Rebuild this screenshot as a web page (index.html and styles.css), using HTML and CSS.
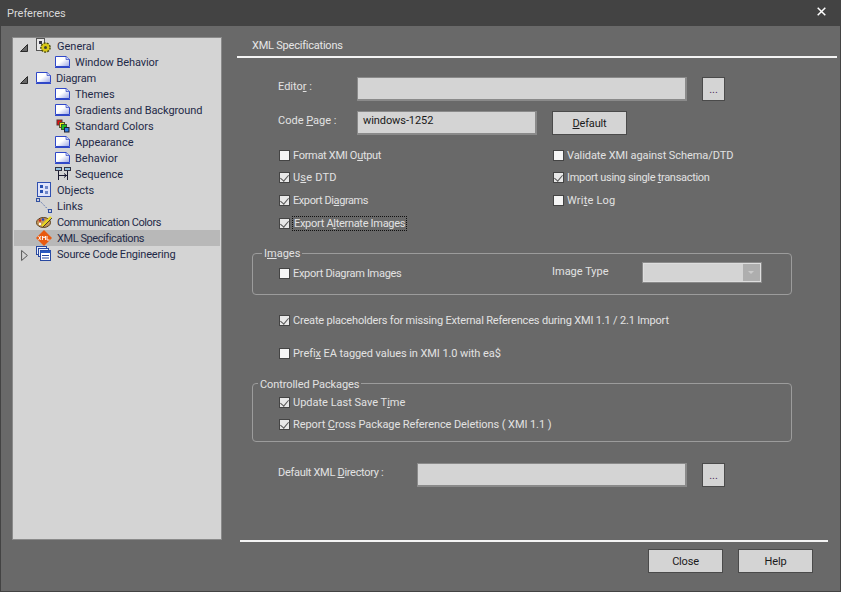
FILE: index.html
```html
<!DOCTYPE html>
<html>
<head>
<meta charset="utf-8">
<title>Preferences</title>
<link rel="stylesheet" href="styles.css">
</head>
<body>
<div class="window">
  <div class="titlebar">
    <span class="title">Preferences</span>
    <svg class="close" width="9" height="9" viewBox="0 0 9 9"><path d="M0.7 0.7L8.3 8.3M8.3 0.7L0.7 8.3" stroke="#fff" stroke-width="1.5" fill="none"/></svg>
  </div>
  <div class="body">
    <aside class="tree">
      <div class="node"><svg class="tw" width="12" height="16" viewBox="0 0 12 16"><use href="#open"/></svg><svg class="ic" width="18" height="16" viewBox="0 0 18 16"><rect x="0.5" y="0.5" width="8" height="12" fill="#e8e8e8" stroke="#555"/><rect x="3" y="3" width="3" height="3" fill="#334"/><circle cx="9.5" cy="9.5" r="4.6" fill="#d8c818" stroke="#4a4a10" stroke-width="1.4" stroke-dasharray="2 1.2"/><circle cx="9.5" cy="9.5" r="1.5" fill="#443"/></svg><span>General</span></div>
      <div class="node sub"><svg class="ic" width="16" height="16" viewBox="0 0 16 16"><use href="#doc"/></svg><span class="s1">Window Behavior</span></div>
      <div class="node"><svg class="tw" width="12" height="16" viewBox="0 0 12 16"><use href="#open"/></svg><svg class="ic ic-diagram" width="18" height="16" viewBox="0 0 18 16"><use href="#doc"/></svg><span class="s2">Diagram</span></div>
      <div class="node sub"><svg class="ic" width="16" height="16" viewBox="0 0 16 16"><use href="#doc"/></svg><span>Themes</span></div>
      <div class="node sub"><svg class="ic" width="16" height="16" viewBox="0 0 16 16"><use href="#doc"/></svg><span class="s1">Gradients and Background</span></div>
      <div class="node sub"><svg class="ic" width="16" height="16" viewBox="0 0 16 16"><rect x="2" y="2" width="5" height="5" fill="#e01010" stroke="#533"/><rect x="4.5" y="4.5" width="5" height="5" fill="#f0e820" stroke="#553"/><rect x="6.5" y="6.5" width="5" height="5" fill="#20c020" stroke="#353"/><rect x="9.5" y="9.5" width="4.5" height="4.5" fill="#3080e0" stroke="#223"/></svg><span>Standard Colors</span></div>
      <div class="node sub"><svg class="ic" width="16" height="16" viewBox="0 0 16 16"><use href="#doc"/></svg><span>Appearance</span></div>
      <div class="node sub"><svg class="ic" width="16" height="16" viewBox="0 0 16 16"><use href="#doc"/></svg><span>Behavior</span></div>
      <div class="node sub"><svg class="ic" width="16" height="16" viewBox="0 0 16 16"><rect x="0.5" y="1.5" width="6" height="3" fill="#8fc0e0" stroke="#334"/><rect x="9.5" y="1.5" width="6" height="3" fill="#8fc0e0" stroke="#334"/><path d="M3.5 5V14M12.5 5V14M4 9.5H12M9 7.5L11.5 9.5L9 11.5" stroke="#1a1a30" fill="none"/></svg><span>Sequence</span></div>
      <div class="node top"><svg class="ic" width="18" height="16" viewBox="0 0 18 16"><rect x="1.5" y="0.5" width="13" height="14" fill="#dfe4fa" stroke="#3050b0"/><rect x="4" y="3" width="3" height="3" fill="#2850b0"/><rect x="9" y="4" width="3" height="3" fill="#7088c8"/><rect x="4" y="8" width="3" height="3" fill="#2850b0"/><rect x="9" y="9" width="3" height="3" fill="#7088c8"/></svg><span>Objects</span></div>
      <div class="node top"><svg class="ic" width="18" height="16" viewBox="0 0 18 16"><path d="M3 2L13.5 13" stroke="#3050a0" stroke-dasharray="1 1.5" fill="none"/><rect x="0.5" y="0.5" width="3" height="3" fill="#ccd" stroke="#3050a0"/><rect x="12.5" y="11.5" width="3" height="3" fill="#ccd" stroke="#3050a0"/></svg><span>Links</span></div>
      <div class="node top"><svg class="ic" width="18" height="16" viewBox="0 0 18 16"><ellipse cx="7.5" cy="8.5" rx="7" ry="5" fill="#c89858" stroke="#5a4020"/><circle cx="4" cy="6.5" r="1.2" fill="#d02020"/><circle cx="7" cy="5.5" r="1.2" fill="#2040c0"/><circle cx="4" cy="10" r="1.2" fill="#fff"/><path d="M6 12L15 3" stroke="#e8d820" stroke-width="2.4"/><path d="M7 13L16 4" stroke="#222" stroke-width="0.8"/></svg><span class="s4">Communication Colors</span></div>
      <div class="node top selected"><svg class="ic" width="18" height="16" viewBox="0 0 18 16"><path d="M8 0L16 8L8 16L0 8Z" fill="#e85a10"/><path d="M2.5 6L5 10M5 6L2.5 10M6.5 10V6L8 8L9.5 6V10M11 6V10H13.5" stroke="#fff" stroke-width="0.9" fill="none"/></svg><span class="s4">XML Specifications</span></div>
      <div class="node"><svg class="tw" width="12" height="16" viewBox="0 0 12 16"><path d="M2.6 4.5L8.4 9.5L2.6 14.5Z" fill="#d4d4d4" stroke="#555"/></svg><svg class="ic" width="18" height="16" viewBox="0 0 18 16"><rect x="0.5" y="0.5" width="10" height="8" fill="#e8ecf8" stroke="#2848a0"/><rect x="2.5" y="2.5" width="10" height="8" fill="#e8ecf8" stroke="#2848a0"/><rect x="4.5" y="4.5" width="10" height="10" fill="#fff" stroke="#2848a0"/><rect x="4.5" y="4.5" width="10" height="2.5" fill="#2858c0"/><path d="M6 9.5H13M6 12H13" stroke="#2848a0"/></svg><span class="s2">Source Code Engineering</span></div>
    </aside>
    <main class="main">
      <h1 class="heading">XML Specifications</h1>
      <div class="form">
        <div class="row row-editor">
          <label class="lbl">Edito<u>r</u> :</label>
          <div class="input w-330"></div>
          <button class="btn btn-dots">...</button>
        </div>
        <div class="row row-code">
          <label class="lbl">Code <u>P</u>age :</label>
          <div class="input w-180 s1">windows-1252</div>
          <button class="btn btn-default s2"><u>D</u>efault</button>
        </div>
        <div class="checks">
          <div class="col">
            <div class="chk r1"><i class="box"></i><span class="s3">Format XMI O<u>u</u>tput</span></div>
            <div class="chk r2"><i class="box on"></i><span class="w2">U<u>s</u>e DTD</span></div>
            <div class="chk r3"><i class="box on"></i><span class="s4">Export Di<u>a</u>grams</span></div>
            <div class="chk r4"><i class="box on"></i><span class="focus s3">Export A<u>l</u>ternate Images</span></div>
          </div>
          <div class="col">
            <div class="chk r1"><i class="box"></i><span class="s1">Validate XMI against Schema/DTD</span></div>
            <div class="chk r2"><i class="box on"></i><span class="s3">Import using single <u>t</u>ransaction</span></div>
            <div class="chk r3"><i class="box"></i><span class="w2">Wri<u>t</u>e Log</span></div>
          </div>
        </div>
        <fieldset class="group group-images">
          <legend class="legend-images">I<u>m</u>ages</legend>
          <div class="chk group-chk"><i class="box"></i><span class="s3">Export Diagram Images</span></div>
          <span class="image-type">Image Type</span>
          <div class="select"><i class="arrow"></i></div>
        </fieldset>
        <div class="chk solo-a"><i class="box on"></i><span class="s2">Create placeholders for missing External References during XMI 1.1 / 2.1 Import</span></div>
        <div class="chk solo-b"><i class="box"></i><span class="s1">Prefi<u>x</u> EA tagged values in XMI 1.0 with ea$</span></div>
        <fieldset class="group group-packages">
          <legend class="legend-packages s1">Controlled Packages</legend>
          <div class="chk group-chk pk1"><i class="box on"></i><span>Update Last Save T<u>i</u>me</span></div>
          <div class="chk group-chk pk2"><i class="box on"></i><span class="s1">Report <u>C</u>ross Package Reference Deletions ( XMI 1.1 )</span></div>
        </fieldset>
        <div class="row row-dir">
          <label class="lbl lbl-dir s3">Default XML <u>D</u>irectory :</label>
          <div class="input w-270"></div>
          <button class="btn btn-dots">...</button>
        </div>
      </div>
      <div class="footer">
        <button class="btn btn-foot s2">Close</button>
        <button class="btn btn-foot s2">Help</button>
      </div>
    </main>
  </div>
</div>
<svg class="defs" width="0" height="0"><defs><linearGradient id="docg" x1="0" y1="0" x2="1" y2="1"><stop offset="0.45" stop-color="#fff"/><stop offset="1" stop-color="#98a4e4"/></linearGradient><g id="open"><path d="M1.5 13.5H8.5V6.5Z" fill="#666" stroke="#2a2a2a"/></g><g id="doc"><path d="M0.5 2.5H11L14.5 5.5V12.5H0.5Z" fill="url(#docg)" stroke="#3048c8"/><path d="M0 13.5H15" stroke="#3048c8" stroke-width="1"/><path d="M11 2.5V5.5H14.5" fill="#c8d0f4" stroke="#3048c8" stroke-width="0.7"/></g></defs></svg>
</body>
</html>
```
FILE: styles.css
```css
* { box-sizing: border-box; }
html, body { margin: 0; padding: 0; }
body { width: 841px; height: 592px; overflow: hidden; background: #696969; font-family: Roboto, "Liberation Sans", Arial, sans-serif; font-size: 11px; color: #e2e2e2; }
.defs { position: absolute; }
.s1 { letter-spacing: -0.08px; }
.s2 { letter-spacing: -0.18px; }
.s3 { letter-spacing: -0.3px; }
.s4 { letter-spacing: -0.42px; }
.w2 { letter-spacing: 0.2px; }
.window { width: 841px; height: 592px; display: flex; flex-direction: column; border: 1px solid #434343; border-top: 0; }
.titlebar { height: 26px; background: #434343; display: flex; align-items: center; justify-content: space-between; padding: 0 14px 0 6px; flex: none; }
.title { color: #d8d8d8; margin-top: 1px; }
.close { display: block; margin-bottom: 3px; }
.body { flex: 1; display: flex; padding: 11px 3px 0 11px; }
.tree { width: 210px; height: 503px; background: #d4d4d4; border: 1px solid #8a8a8a; padding: 0 1px; color: #1f2a48; flex: none; }
.node { height: 16px; display: flex; align-items: center; padding-left: 5px; white-space: nowrap; }
.node .tw { margin-right: 5px; flex: none; }
.node .ic { margin-right: 3px; flex: none; }
.node .ic-diagram { margin-right: 2px; }
.node.sub { padding-left: 41px; }
.node.sub .ic { margin-right: 4px; }
.node.top { padding-left: 22px; }
.node.selected { background: #b8b8b8; }
.main { margin-left: 15px; flex: 1; display: flex; flex-direction: column; min-width: 0; }
.heading { margin: 0; font: inherit; letter-spacing: -0.22px; height: 21px; line-height: 17px; padding-left: 15px; border-bottom: 2px solid #f4f4f4; color: #e6e6e6; flex: none; }
.form { flex: none; height: 482px; padding: 19px 0 0 41px; }
.row { display: flex; align-items: stretch; }
.row-code { margin-top: 10px; }
.lbl { flex: none; width: 79px; line-height: 20px; color: #e2e2e2; }
.lbl-dir { width: 139px; }
.input { height: 24px; background: #d4d4d4; border: 2px solid #8a8a8a; border-width: 1px 2px 2px 1px; color: #1a1a1a; line-height: 18px; padding-left: 5px; flex: none; }
.w-330 { width: 330px; }
.w-180 { width: 180px; }
.w-270 { width: 270px; }
.btn { height: 24px; background: #d4d4d4; border: 1px solid #4a4a4a; font-family: inherit; font-size: inherit; color: #1a1a1a; padding: 0; flex: none; }
.btn-dots { width: 23px; margin-left: 15px; color: #503060; }
.btn-default { width: 75px; margin-left: 15px; }
.checks { display: flex; margin-top: 9px; padding-left: 1px; }
.col { width: 274px; }
.chk { display: flex; align-items: center; height: 14px; white-space: nowrap; }
.r1 { margin-top: 4px; }
.r2 { margin-top: 8px; }
.r3 { margin-top: 9px; }
.r4 { margin-top: 9px; }
.box { width: 11px; height: 11px; flex: none; margin-right: 3px; background: #f5f5f5; border: 1px solid #444; display: block; position: relative; }
.box.on { background: #e8e8e8; }
.box.on::after { content: ""; position: absolute; left: 2px; top: 0; width: 4px; height: 7px; border: solid #555; border-width: 0 1.5px 1.5px 0; transform: rotate(40deg); }
.focus { outline: 1px dotted #111; outline-offset: 0; padding: 0 1px; }
.group { position: relative; margin: 0; padding: 0; border: 1px solid #9c9c9c; border-radius: 4px; min-width: 0; }
.group legend { padding: 0 2px; line-height: 14px; }
.group-chk { margin-left: 26px; }
.group-images { margin-left: -26px; width: 540px; height: 49px; margin-top: 16px; }
.legend-images { margin-left: 9px; transform: translateY(1px); }
.group-images > .chk { margin-top: 6px; }
.image-type { position: absolute; left: 299px; top: 5px; }
.select { position: absolute; left: 389px; top: 2px; width: 120px; height: 21px; background: #d4d4d4; border: 1px solid #8a8a8a; box-shadow: inset 0 0 0 1px #dedede; }
.arrow { position: absolute; right: 1px; top: 1px; bottom: 1px; width: 17px; background: #aeaeae; }
.arrow::after { content: ""; position: absolute; left: 5px; top: 7px; border: 3px solid transparent; border-top-color: #cacaca; }
.solo-a { margin-top: 18px; margin-left: 1px; }
.solo-b { margin-top: 19px; margin-left: 1px; }
.group-packages { margin-left: -26px; width: 540px; height: 66px; margin-top: 16px; }
.legend-packages { margin-left: 5px; transform: translateY(2px); }
.group-packages > .pk1 { margin-top: 5px; }
.group-packages > .pk2 { margin-top: 8px; }
.row-dir { margin-top: 21px; }
.footer { flex: none; margin-right: 9px; margin-left: 3px; border-top: 2px solid #f4f4f4; display: flex; justify-content: flex-end; gap: 15px; padding: 7px 15px 0 0; }
.btn-foot { width: 75px; }
```
